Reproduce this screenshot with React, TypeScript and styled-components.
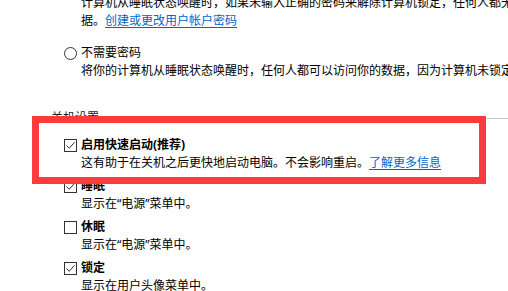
import React from 'react'
import styled, { createGlobalStyle } from 'styled-components'

const GlobalStyle = createGlobalStyle`
  html, body {
    margin: 0;
    padding: 0;
    background: #ffffff;
    overflow: hidden;
  }
  body {
    font-family: "Noto Sans", "Noto Sans CJK SC", sans-serif;
    font-size: 12px;
    color: #000000;
  }
`

const Page = styled.div`
  position: relative;
  display: flow-root;
  width: 800px;
  height: 291px;
  padding-left: 51px;
  box-sizing: border-box;
`

const Options = styled.div`
  margin-left: 13px;
`

const Desc = styled.p<{ $width?: number; $top?: number }>`
  margin: ${(p) => p.$top ?? 0}px 0 0 17px;
  line-height: 18px;
  width: ${(p) => (p.$width ? `${p.$width}px` : 'auto')};
  white-space: ${(p) => (p.$width ? 'normal' : 'nowrap')};
`

const Link = styled.a`
  color: #0066cc;
  text-decoration: underline;
  text-underline-offset: 2px;
  cursor: pointer;
`

const Row = styled.label<{ $top: number }>`
  display: flex;
  align-items: flex-start;
  gap: 4px;
  height: 19px;
  line-height: 19px;
  margin-top: ${(p) => p.$top}px;
`

const Label = styled.span<{ $bold?: boolean }>`
  font-weight: ${(p) => (p.$bold ? 700 : 400)};
  color: #000000;
`

const RadioCircle = styled.span`
  flex: none;
  width: 13px;
  height: 13px;
  margin-top: 4px;
  box-sizing: border-box;
  border: 1px solid #333333;
  border-radius: 50%;
  background: #ffffff;
`

const CheckBox = styled.span`
  flex: none;
  display: flex;
  width: 13px;
  height: 13px;
  margin-top: 4px;
  box-sizing: border-box;
  border: 1px solid #333333;
  background: #ffffff;
`

const Heading = styled.div`
  display: flex;
  align-items: center;
  height: 19px;
  line-height: 19px;
  margin-top: 28px;
  gap: 8px;
  color: #1e1e1e;
`

const Rule = styled.span`
  flex: 1;
  height: 1px;
  margin-top: 1px;
  background: #cccccc;
`

const Highlight = styled.div`
  position: absolute;
  left: 32px;
  top: 116px;
  width: 454px;
  height: 68px;
  box-sizing: border-box;
  border: 7px solid #fd3b3d;
  pointer-events: none;
`

function Check({ checked }: { checked: boolean }) {
  return (
    <CheckBox>
      {checked && (
        <svg width="11" height="11" viewBox="0 0 11 11">
          <path
            d="M1.5 5.5 L4.2 8.3 L9.6 2.2"
            fill="none"
            stroke="#333333"
            strokeWidth="1"
          />
        </svg>
      )}
    </CheckBox>
  )
}

const menus = [
  { label: '睡眠', checked: true, desc: '显示在“电源”菜单中。' },
  { label: '休眠', checked: false, desc: '显示在“电源”菜单中。' },
  { label: '锁定', checked: true, desc: '显示在用户头像菜单中。' },
]

export default function App() {
  return (
    <>
      <GlobalStyle />
      <Page>
        <Options>
          <Desc $width={505} $top={-6}>
            计算机从睡眠状态唤醒时，如果未输入正确的密码来解除计算机锁定，任何人都无法访问你的数据。
            <Link>创建或更改用户帐户密码</Link>
          </Desc>
          <Row $top={13}>
            <RadioCircle />
            <Label>不需要密码</Label>
          </Row>
          <Desc>将你的计算机从睡眠状态唤醒时，任何人都可以访问你的数据，因为计算机未锁定。</Desc>
        </Options>

        <Heading>
          <span>关机设置</span>
          <Rule />
        </Heading>

        <Options>
          <Row $top={8}>
            <Check checked />
            <Label $bold>启用快速启动(推荐)</Label>
          </Row>
          <Desc>
            这有助于在关机之后更快地启动电脑。不会影响重启。<Link>了解更多信息</Link>
          </Desc>
          {menus.map((m) => (
            <React.Fragment key={m.label}>
              <Row $top={4}>
                <Check checked={m.checked} />
                <Label $bold>{m.label}</Label>
              </Row>
              <Desc>{m.desc}</Desc>
            </React.Fragment>
          ))}
        </Options>

        <Highlight />
      </Page>
    </>
  )
}
